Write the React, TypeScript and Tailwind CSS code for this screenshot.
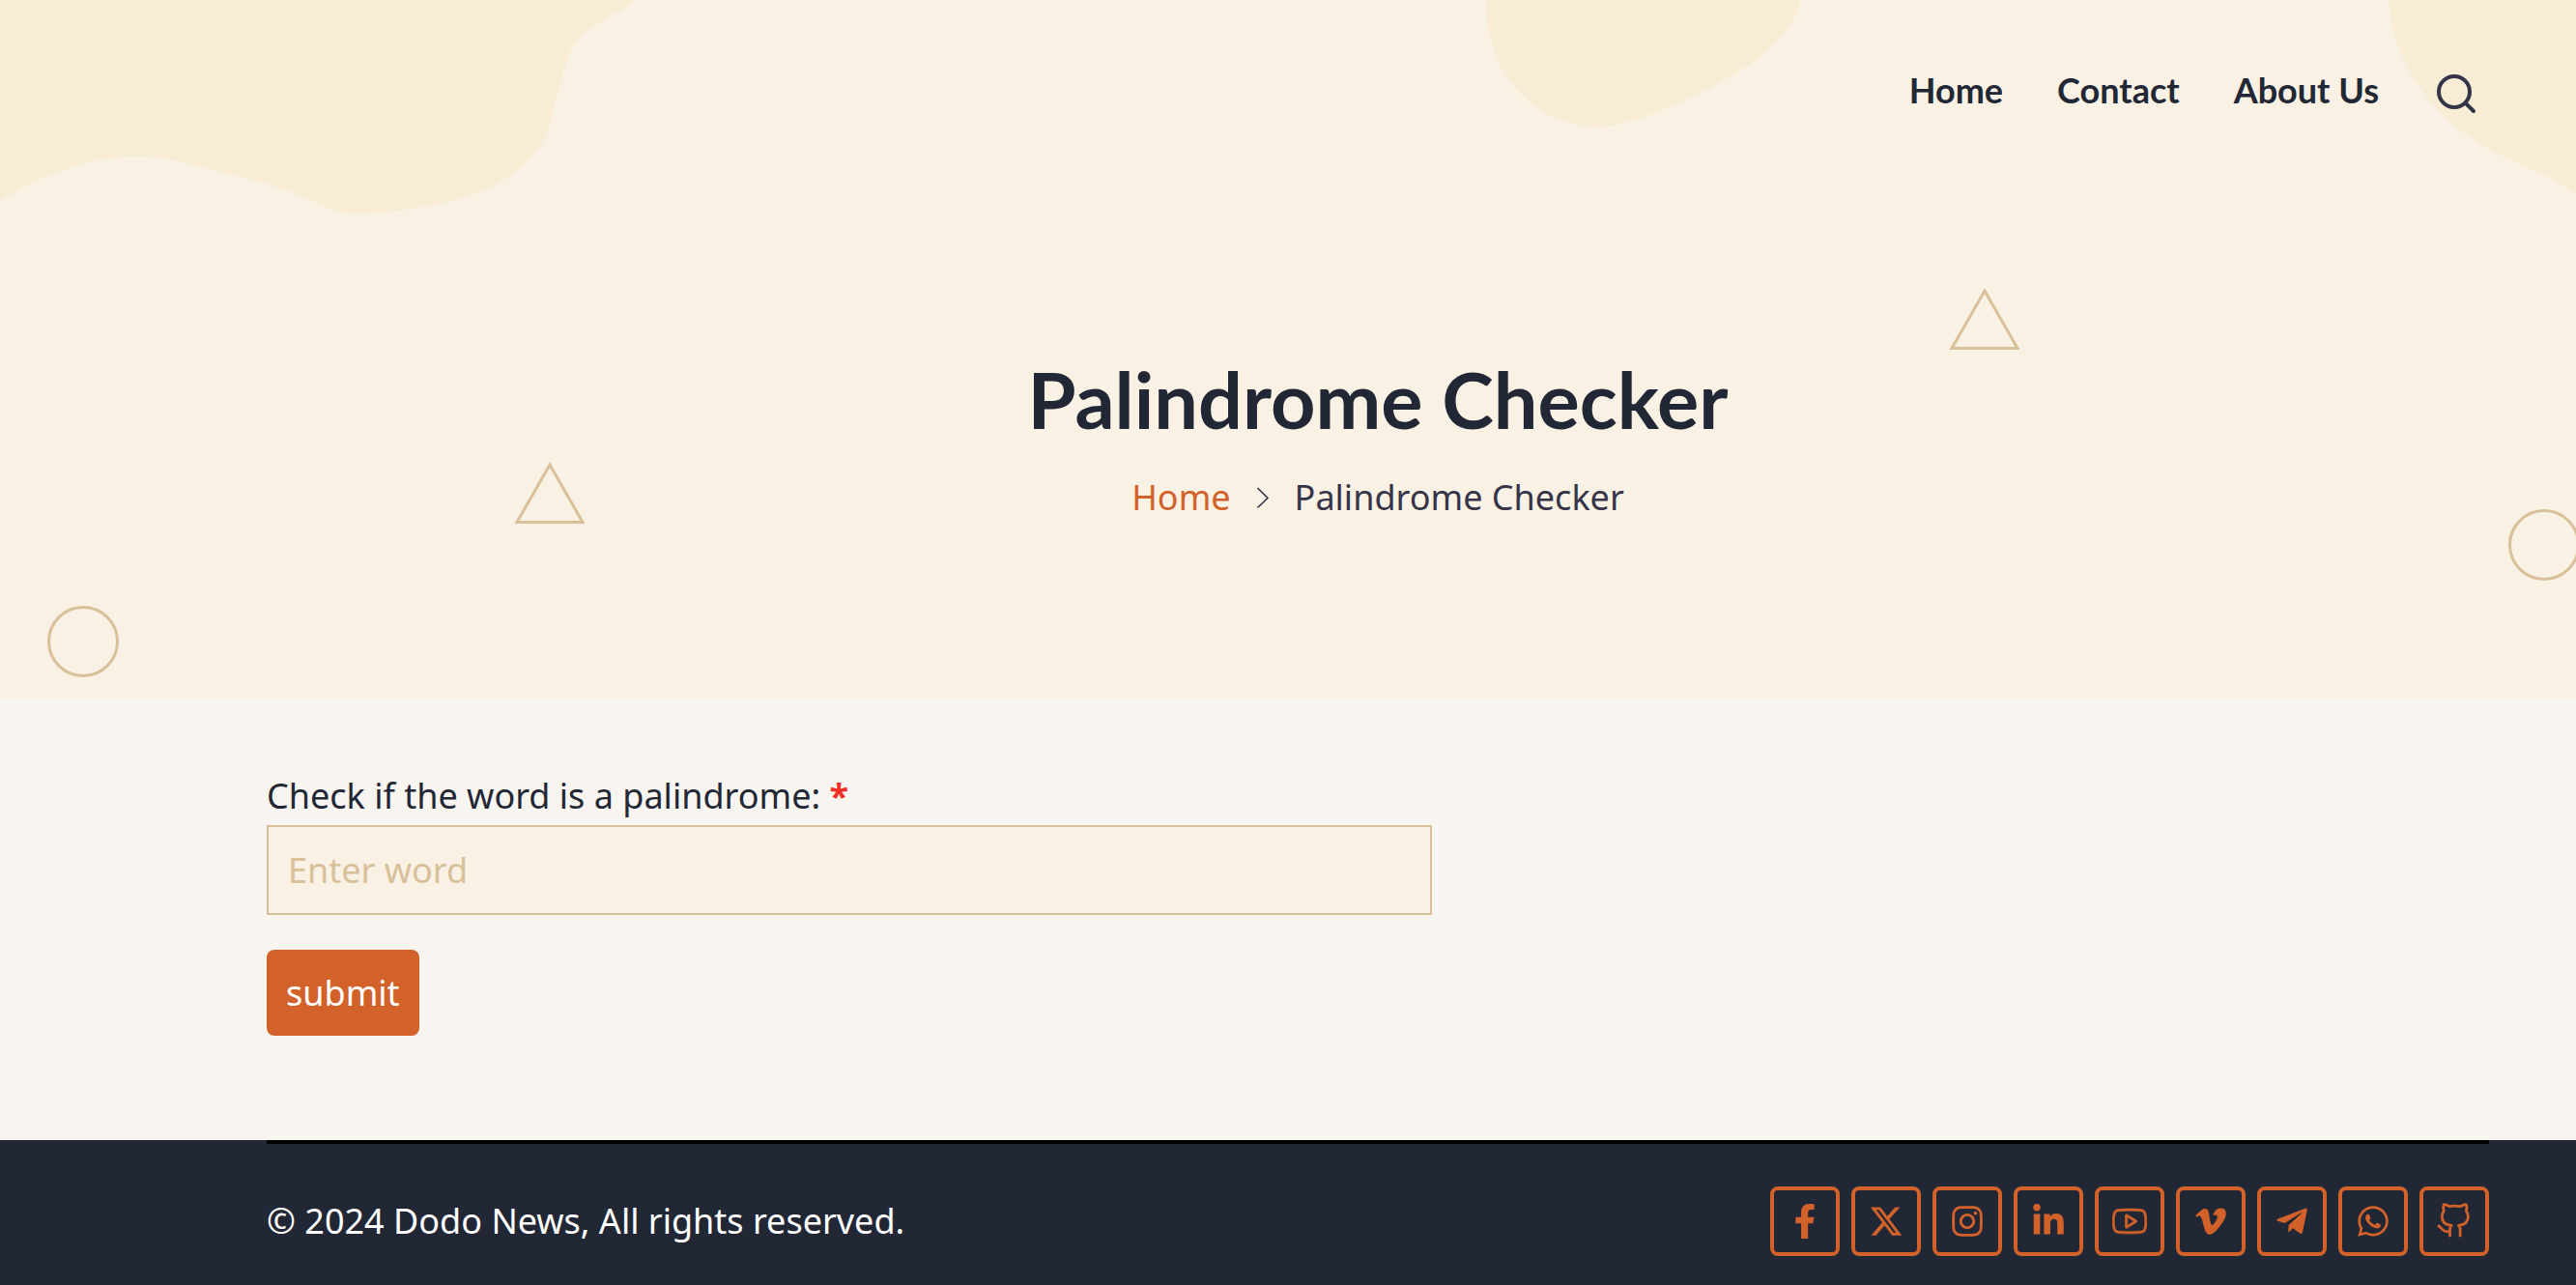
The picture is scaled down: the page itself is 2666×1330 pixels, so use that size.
import type { ReactNode } from "react";
import { Search } from "lucide-react";
import { FaFacebookF, FaInstagram, FaLinkedinIn, FaVimeoV, FaTelegramPlane, FaWhatsapp } from "react-icons/fa";
import { FaXTwitter } from "react-icons/fa6";
import { SlSocialYoutube } from "react-icons/sl";

function GithubCat() {
  return (
    <svg viewBox="0 0 36 36" width={36} height={36} fill="none" stroke="currentColor" strokeWidth={2.8} strokeLinecap="round" strokeLinejoin="round" className="overflow-visible">
      <path d="M13.5 33V26.2c0-1.6.6-2.9 1.7-3.9C8.6 21.7 5.2 18.4 5.2 13c0-2.3.8-4.2 2.1-5.6C6.5 5.4 6.5 2.6 7.4.6c2 0 4 1 5.6 2.1 3.8-.8 7.8-.8 11.6 0C26.2 1.6 28.2.6 30.2.6c.9 2 .9 4.8.1 6.8 1.3 1.4 2.1 3.3 2.1 5.6 0 5.4-3.4 8.7-10 9.3 1.1 1 1.7 2.3 1.7 3.9V33" />
      <path d="M2 23c2.8 1.5 3.6 5.5 8 5.700h3.500" />
    </svg>
  );
}

const socials: { name: string; icon: ReactNode }[] = [
  { name: "Facebook", icon: <FaFacebookF size={36} /> },
  { name: "X", icon: <FaXTwitter size={36} /> },
  { name: "Instagram", icon: <FaInstagram size={36} /> },
  { name: "LinkedIn", icon: <FaLinkedinIn size={36} /> },
  { name: "YouTube", icon: <SlSocialYoutube size={36} strokeWidth={18} /> },
  { name: "Vimeo", icon: <FaVimeoV size={36} /> },
  { name: "Telegram", icon: <FaTelegramPlane size={36} /> },
  { name: "WhatsApp", icon: <FaWhatsapp size={36} /> },
  { name: "GitHub", icon: <GithubCat /> },
];

const Triangle = () => (
  <svg viewBox="0 0 74 64" width={74} height={64} fill="none" stroke="#d8c09a" strokeWidth={3}>
    <path d="M37 3 3 62.500h68z" />
  </svg>
);

function HeroShapes() {
  return (
    <div aria-hidden="true" className="pointer-events-none absolute inset-0 overflow-hidden">
      <svg className="absolute top-0 left-0" width={660} height={224} viewBox="0 0 660 224" fill="#f8ecd5">
        <path d="M0 0H657C645 12 620 22 607 32C594 42 588 56 584 72C578 94 575 106 571 122C566 148 552 162 533 178C497 207 430 219 370 221C350 221 338 215 321 207C286 191 240 181 190 168C170 163 156 162 140 162C90 162 43 182 0 208Z" />
      </svg>
      <svg className="absolute top-0 left-[1538px]" width={328} height={132} viewBox="0 0 328 132" fill="#f8ecd5">
        <path d="M1 0C-4 76 52 131 117 131C146 131 193 111 230 92C276 68 316 39 326 0Z" />
      </svg>
      <svg className="absolute top-0 right-0" width={195} height={202} viewBox="0 0 195 202" fill="#f8ecd5">
        <path d="M1 0C5 62 45 120 96 149C125 168 165 178 195 201V0Z" />
      </svg>
      <div className="absolute top-[298px] left-[2017px]"><Triangle /></div>
      <div className="absolute top-[478px] left-[532px]"><Triangle /></div>
      <div className="absolute top-[627px] left-[49px] size-[74px] rounded-full border-3 border-[#d8c09a]" />
      <div className="absolute top-[527px] right-[-4px] size-[74px] rounded-full border-3 border-[#d8c09a]" />
    </div>
  );
}

export default function App() {
  return (
    <div className="flex min-h-screen flex-col bg-[#f8f4ef] font-['Noto_Sans',sans-serif] text-[36px] text-[#222735]">
      <header className="relative bg-[#f9f1e3] pr-[90px] pl-[276px]">
        <HeroShapes />
        <nav aria-label="Main" className="relative flex items-start justify-end gap-14 pt-[69px] pr-[10px] font-['Lato',sans-serif] leading-[48px] font-bold">
          <a href="#home">Home</a>
          <a href="#contact">Contact</a>
          <a href="#about">About Us</a>
          <button type="button" aria-label="Search" className="pt-1 text-[#363449]">
            <Search size={48} strokeWidth={2} />
          </button>
        </nav>
        <div className="relative flex flex-col items-center pt-[244px] pb-[178px]">
          <h1 className="font-['Lato',sans-serif] text-[81px] leading-[96px] font-bold">Palindrome Checker</h1>
          <nav aria-label="Breadcrumb" className="mt-6 flex items-center leading-[60px] text-[#363449]">
            <a href="#home" className="text-[#d2622a]">Home</a>
            <svg viewBox="0 0 14 24" width={14} height={24} fill="none" stroke="currentColor" strokeWidth={1.6} className="mx-[26px]">
              <path d="M1.500 2 12 12.500 1.500 22.500" />
            </svg>
            <span>Palindrome Checker</span>
          </nav>
        </div>
      </header>

      <main className="pt-[71px] pr-[90px] pb-[108px] pl-[276px]">
        <form onSubmit={(e) => e.preventDefault()}>
          <label htmlFor="word" className="block leading-[60px]">
            Check if the word is a palindrome: <span className="font-bold text-[#ee2e24]">*</span>
          </label>
          <input
            id="word"
            type="text"
            placeholder="Enter word"
            className="block w-[1206px] max-w-full border-2 border-[#d8c09a] bg-[#f9f1e3] px-5 py-4 leading-[57px] outline-none placeholder:text-[#d8c09a]"
          />
          <button type="submit" className="mt-9 block rounded-lg bg-[#d2622a] px-5 py-4 leading-[57px] text-white">
            submit
          </button>
        </form>
      </main>

      <footer className="grow bg-[#222735] pr-[90px] pl-[276px] text-white">
        <div className="flex items-center justify-between border-t-4 border-black pt-11 pb-[29px]">
          <p>© 2024 Dodo News, All rights reserved.</p>
          <ul className="flex gap-3">
            {socials.map((s) => (
              <li key={s.name}>
                <a href={`#${s.name.toLowerCase()}`} aria-label={s.name} className="flex size-[72px] items-center justify-center rounded-lg border-4 border-[#d2622a] text-[#d2622a]">
                  {s.icon}
                </a>
              </li>
            ))}
          </ul>
        </div>
      </footer>
    </div>
  );
}
